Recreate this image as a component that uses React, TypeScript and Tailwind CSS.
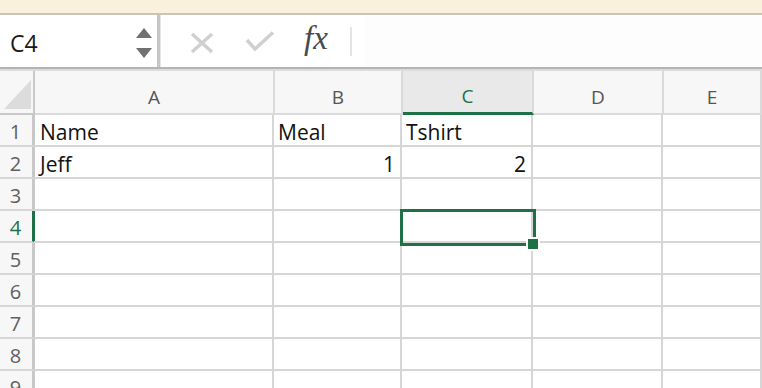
import React from "react";

const font = { fontFamily: '"Open Sans", "DejaVu Sans", sans-serif' };

type Col = { key: string; w: string };
const cols: Col[] = [
  { key: "A", w: "w-[240px]" },
  { key: "B", w: "w-[128px]" },
  { key: "C", w: "w-[131px]" },
  { key: "D", w: "w-[130px]" },
  { key: "E", w: "flex-1" },
];

const data: Record<number, Record<string, { v: string; right?: boolean }>> = {
  1: { A: { v: "Name" }, B: { v: "Meal" }, C: { v: "Tshirt" } },
  2: { A: { v: "Jeff" }, B: { v: "1", right: true }, C: { v: "2", right: true } },
};

export default function App() {
  const rows = [1, 2, 3, 4, 5, 6, 7, 8, 9];
  return (
    <div className="w-[762px] h-[388px] overflow-hidden bg-white text-black" style={font}>
      {/* banner */}
      <div className="h-[15px] bg-[#faf1dd] border-b-2 border-[#cbc3b3]" />
      {/* formula bar */}
      <div className="h-[52px] flex bg-white">
        <div className="w-[157px] flex items-center justify-between pl-[10px] pr-[5px]">
          <span className="text-[23px] leading-none text-[#1a1a1a] pt-[5px]">C4</span>
          <div className="flex flex-col items-center gap-[10px] pt-[4px]">
            <svg width="16" height="10" viewBox="0 0 16 10"><path d="M8 0 L16 10 L0 10 Z" fill="#707070" /></svg>
            <svg width="16" height="10" viewBox="0 0 16 10"><path d="M0 0 L16 0 L8 10 Z" fill="#707070" /></svg>
          </div>
        </div>
        <div className="w-[3px] bg-[#c6c6c6]" />
        <div className="w-[1px] bg-[#e6e6e6]" />
        <div className="flex-1 flex items-center relative">
          <svg className="absolute left-[29px] top-[17px]" width="24" height="22" viewBox="0 0 24 22">
            <path d="M2 2 L22 20 M22 2 L2 20" stroke="#d0d0d0" strokeWidth="3.5" strokeLinecap="butt" />
          </svg>
          <svg className="absolute left-[84px] top-[16px]" width="30" height="22" viewBox="0 0 30 22">
            <path d="M2 9 L10 18 L28 1.5" stroke="#d0d0d0" strokeWidth="3.5" fill="none" />
          </svg>
          <span
            className="absolute left-[143px] top-[7px] text-[33px] italic leading-none text-[#4a4a4a]"
            style={{ fontFamily: '"Liberation Serif", "DejaVu Serif", serif' }}
          >
            fx
          </span>
          <div className="absolute left-[189px] top-[12px] w-[2px] h-[29px] bg-[#e4e4e4]" />
          <div className="absolute left-[204px] top-0 right-0 bottom-0 bg-[#fdfdfd]" />
        </div>
      </div>
      <div className="h-[2px] bg-[#b4b4b4]" />
      <div className="h-[2px] bg-[#dcdcdc]" />
      {/* sheet */}
      <div className="relative">
        {/* header row */}
        <div className="flex h-[44px] bg-[#f7f7f7]">
          <div className="w-[35px] border-r-2 border-b-2 border-[#c8c8c8] relative">
            <svg className="absolute left-[4px] top-[9px]" width="27" height="29" viewBox="0 0 27 29">
              <path d="M27 0 L27 29 L0 29 Z" fill="#dcdcdc" />
            </svg>
          </div>
          {cols.map((c) => {
            const sel = c.key === "C";
            return (
              <div
                key={c.key}
                className={`${c.w} flex items-center justify-center pt-[10px] text-[19px] ${
                  sel
                    ? "bg-[#e9e9e9] text-[#1e7145] border-b-[3px] border-b-[#1e7145] border-r-2 border-r-[#dadada]"
                    : "text-[#555555] border-r-2 border-b-2 border-[#dadada]"
                }`}
              >
                {c.key}
              </div>
            );
          })}
        </div>
        {rows.map((r) => (
          <div key={r} className="flex h-[32px]">
            <div
              className={`w-[35px] bg-[#f7f7f7] border-b-2 border-b-[#d6d6d6] border-r-[3px] flex items-end justify-center pb-[1px] pr-[1px] text-[20px] leading-[24px] ${
                r === 4 ? "border-r-[#1e7145] text-[#1e7145]" : "border-r-[#c8c8c8] text-[#606060]"
              }`}
            >
              {r}
            </div>
            {cols.map((c, i) => {
              const cell = data[r]?.[c.key];
              return (
                <div
                  key={c.key}
                  className={`${c.w} ${i === 0 ? "-ml-[1px]" : ""} border-r-2 border-b-2 border-[#d6d6d6] flex items-end pb-[1px] text-[21px] leading-[24px] text-[#111] ${
                    cell?.right ? "justify-end pr-[5px]" : i === 0 ? "justify-start pl-[6px]" : "justify-start pl-[4px]"
                  }`}
                >
                  {cell?.v ?? ""}
                </div>
              );
            })}
          </div>
        ))}
        {/* selection */}
        <div className="absolute left-[400px] top-[138px] w-[136px] h-[37px] border-[3px] border-[#1e7145]" />
        <div className="absolute left-[526px] top-[166px] w-[14px] h-[14px] border-2 border-white bg-[#1e7145]" />
      </div>
    </div>
  );
}
